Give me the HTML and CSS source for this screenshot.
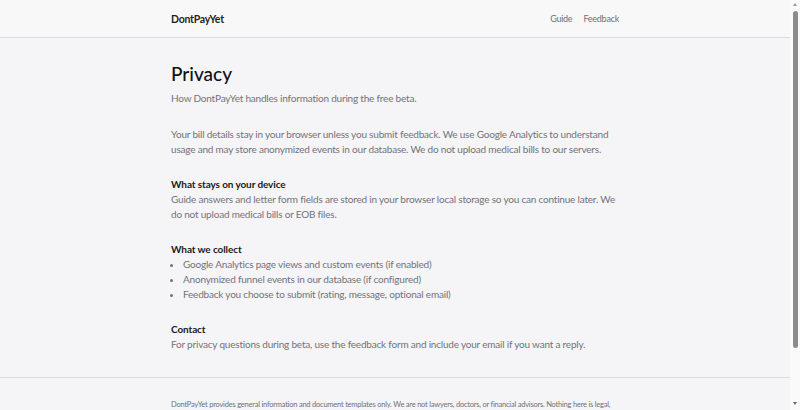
FILE: index.html
```html
<!DOCTYPE html>
<html lang="en">
<head>
<meta charset="utf-8">
<title>Privacy - DontPayYet</title>
<link rel="stylesheet" href="styles.css">
</head>
<body>
<div class="page">
  <header class="site-header">
    <div class="container header-inner">
      <a class="brand" href="#">DontPayYet</a>
      <nav class="nav">
        <a href="#">Guide</a>
        <a href="#">Feedback</a>
      </nav>
    </div>
  </header>
  <main class="container main">
    <h1 class="title">Privacy</h1>
    <p class="lead">How DontPayYet handles information during the free beta.</p>
    <p class="text intro">Your bill details stay in your browser unless you submit feedback. We use Google Analytics to understand usage and may store anonymized events in our database. We do not upload medical bills to our servers.</p>
    <section class="section">
      <h2 class="section-title">What stays on your device</h2>
      <p class="text">Guide answers and letter form fields are stored in your browser local storage so you can continue later. We do not upload medical bills or EOB files.</p>
    </section>
    <section class="section">
      <h2 class="section-title">What we collect</h2>
      <ul class="list">
        <li>Google Analytics page views and custom events (if enabled)</li>
        <li>Anonymized funnel events in our database (if configured)</li>
        <li>Feedback you choose to submit (rating, message, optional email)</li>
      </ul>
    </section>
    <section class="section">
      <h2 class="section-title">Contact</h2>
      <p class="text">For privacy questions during beta, use the feedback form and include your email if you want a reply.</p>
    </section>
  </main>
  <footer class="site-footer">
    <div class="container">
      <p class="disclaimer">DontPayYet provides general information and document templates only. We are not lawyers, doctors, or financial advisors. Nothing here is legal, medical, or financial advice. Review every letter before sending it and contact a qualified professional for advice about your situation.</p>
    </div>
  </footer>
</div>
<div class="scrollbar" aria-hidden="true">
  <span class="scroll-arrow up"></span>
  <span class="scroll-thumb"></span>
  <span class="scroll-arrow down"></span>
</div>
</body>
</html>
```
FILE: styles.css
```css
html, body {
  margin: 0;
  padding: 0;
}
body {
  background: #f5f5f7;
  color: #1a1a1c;
  font-family: "Lato", "Liberation Sans", sans-serif;
}
.page {
  margin-right: 10px;
}
a {
  text-decoration: none;
  color: inherit;
}
.container {
  max-width: 448px;
  margin: 0 auto;
}
.site-header {
  background: #f8f8f9;
  border-bottom: 1px solid #dcdce0;
}
.header-inner {
  height: 37px;
  display: flex;
  align-items: center;
  justify-content: space-between;
}
.brand {
  font-size: 10.5px;
  font-weight: 700;
  letter-spacing: -0.25px;
  color: #1f1f22;
}
.nav {
  display: flex;
  gap: 11px;
  font-size: 9px;
  letter-spacing: -0.25px;
  color: #6f6f77;
}
.main {
  padding: 24px 0 25px;
}
.title {
  margin: 0 0 5px;
  font-size: 19px;
  line-height: 24px;
  font-weight: 500;
  color: #111114;
}
.lead,
.text,
.list {
  font-size: 10px;
  line-height: 15px;
  letter-spacing: -0.2px;
  color: #72727a;
}
.lead,
.text {
  margin: 0;
}
.intro {
  margin-top: 21px;
}
.section {
  margin-top: 20px;
}
.section-title {
  margin: 0;
  font-size: 10px;
  line-height: 15px;
  font-weight: 700;
  letter-spacing: -0.1px;
  color: #1a1a1c;
}
.list {
  margin: 0;
  padding-left: 12px;
}
.site-footer {
  border-top: 1px solid #dcdce0;
  padding: 21px 0 20px;
}
.disclaimer {
  margin: 0;
  font-size: 7.5px;
  line-height: 12px;
  letter-spacing: -0.22px;
  color: #707078;
}
.scrollbar {
  position: fixed;
  top: 0;
  right: 0;
  bottom: 0;
  width: 10px;
  background: #fafafa;
  display: flex;
  flex-direction: column;
  align-items: center;
}
.scroll-arrow {
  width: 0;
  height: 0;
  border-left: 2.5px solid transparent;
  border-right: 2.5px solid transparent;
  margin: 3px 0;
}
.scroll-arrow.up {
  border-bottom: 3px solid #9a9a9a;
}
.scroll-arrow.down {
  border-top: 3px solid #6a6a6a;
  margin-top: auto;
  margin-bottom: 5px;
}
.scroll-thumb {
  width: 5px;
  height: 337px;
  margin-top: 2px;
  border-radius: 3px;
  background: #8c8c8c;
}
```
